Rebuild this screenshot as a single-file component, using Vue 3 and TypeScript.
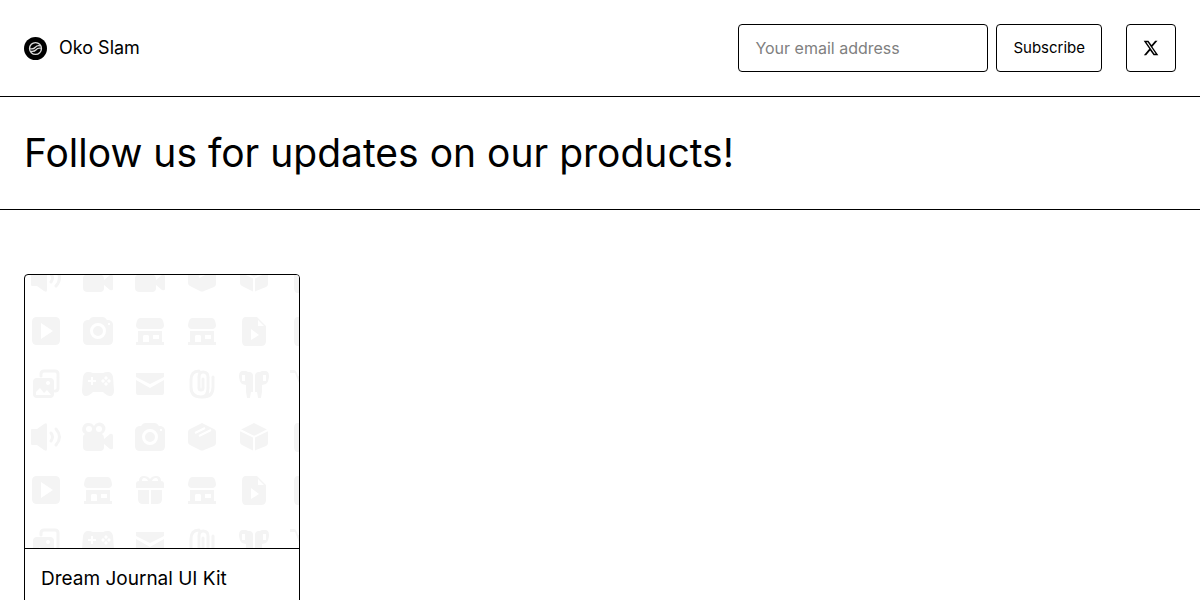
<script setup lang="ts">
import { ref } from 'vue'

interface Product {
  id: number
  title: string
}

interface Tile {
  icon: string
  x: number
  y: number
}

const email = ref('')
const products: Product[] = [{ id: 1, title: 'Dream Journal UI Kit' }]

const rows: string[][] = [
  ['speaker', 'film', 'film', 'box', 'cube', 'file'],
  ['play', 'camera', 'store', 'store', 'file', 'file'],
  ['gallery', 'gamepad', 'mail', 'clip', 'pods', 'cart'],
  ['speaker', 'film', 'camera', 'box', 'cube', 'file'],
  ['play', 'store', 'gift', 'store', 'file', 'file'],
  ['gallery', 'gamepad', 'mail', 'clip', 'pods', 'cart'],
]

const tiles: Tile[] = rows.flatMap((row, r) =>
  row.map((icon, c) => ({ icon, x: 21 + c * 52, y: 3 + r * 53 })),
)
</script>

<template>
  <div class="page">
    <header class="topbar">
      <a class="brand" href="#">
        <svg class="avatar" viewBox="0 0 24 24" aria-hidden="true">
          <circle cx="12" cy="12" r="12" />
          <circle cx="12" cy="12" r="6.200" class="ring" />
          <path class="wave" d="M6.500 12.200c3.500 1 4.500-.5 5.500-1.700s2.500-2 5-1.300M7 14.800c3 .7 4.500-.3 5.600-1.500 1.200-1.400 2-2 4.900-1.500" />
        </svg>
        <span>Oko Slam</span>
      </a>
      <div class="actions">
        <form class="subscribe" @submit.prevent>
          <input v-model="email" class="field" type="email" placeholder="Your email address" aria-label="Your email address" />
          <button class="button" type="submit">Subscribe</button>
        </form>
        <a class="button social" href="#" aria-label="X">
          <svg viewBox="0 0 24 24" aria-hidden="true">
            <path fill-rule="evenodd" d="M18.244 1.250h3.508l-7.727 8.830L23 22.750h-7.066l-5.214-6.817-5.966 6.817H1.244l8.130-9.450L1 1.250h7.080l4.713 6.231Zm-1.161 19.420h1.833L7.084 3.226H5.117Z" />
          </svg>
        </a>
      </div>
    </header>

    <section class="intro">
      <h1>Follow us for updates on our products!</h1>
    </section>

    <main class="products">
      <article v-for="product in products" :key="product.id" class="card">
        <svg class="cover" viewBox="0 0 274 273" preserveAspectRatio="xMidYMid slice" aria-hidden="true">
          <defs>
            <g id="i-speaker">
              <path d="M-14-8h5l7-5q3-2 3 1v24q0 3-3 1l-7-5h-5q-1 0-1-1V-7q0-1 1-1Z" />
              <path class="line" d="M5-4q3 4 0 8M10-8q7 8 0 16" />
            </g>
            <g id="i-film">
              <path fill-rule="evenodd" d="M-9-14a6 6 0 0 1 5 3 6 6 0 1 1 8 8q2 1 2 4v1l6-5q3-1 3 2V11q0 2-3 1L6 7v3q0 4-4 4h-12q-5 0-5-4V0q0-2 2-3a6 6 0 0 1 4-11Zm0 3a3 3 0 1 0 0 6 3 3 0 0 0 0-6Zm10 0a3 3 0 1 0 0 6 3 3 0 0 0 0-6Z" />
            </g>
            <g id="i-box">
              <path d="M0-14 12-8q2 1 2 3V6q0 2-2 3L2 13q-2 1-4 0l-10-5q-2-1-2-3V-5q0-2 2-3Z" />
              <path class="cut" d="m-7-4 10-5M-3-1 9-7" />
            </g>
            <g id="i-cube">
              <path d="M0-14 12-8q2 1 2 3V6q0 2-2 3L2 13q-2 1-4 0l-10-5q-2-1-2-3V-5q0-2 2-3Z" />
              <path class="cut" d="m-14-7 14 7 14-7M0 0v15" />
            </g>
            <g id="i-play">
              <path fill-rule="evenodd" d="M-9-14H9q5 0 5 5V9q0 5-5 5H-9q-5 0-5-5V-9q0-5 5-5Zm4 6V8L7 0Z" />
            </g>
            <g id="i-camera">
              <path fill-rule="evenodd" d="M-5-14H5q2 0 4 3h2q4 1 4 5V9q0 5-5 5h-20q-5 0-5-5V-6q0-4 4-5h2q2-3 4-3Zm5 6a8 8 0 1 0 0 16A8 8 0 0 0 0-8Zm0 3a5 5 0 1 1 0 10A5 5 0 0 1 0-5Zm10-3v2h2v-2Z" />
            </g>
            <g id="i-store">
              <path fill-rule="evenodd" d="M-10-13h20q3 0 4 7 0 4-4 4h-20q-4 0-4-4 1-7 4-7Zm-2 13h24v11h2v3h-28v-3h2Zm6 4q-1 0-1 2v5h6V6q0-2-1-2Zm9 0v4h6V4Z" />
            </g>
            <g id="i-file">
              <path fill-rule="evenodd" d="M-8-14H3l9 9V10q0 5-5 5H-8q-4 0-4-5V-9q0-5 4-5Zm12 3v6h6ZM-3-2V9l8-5Z" />
            </g>
            <g id="i-gallery">
              <path class="line" d="M-5-8v-2q0-3 3-3H9q3 0 3 3V4q0 3-3 3" />
              <path fill-rule="evenodd" d="M-9-6H4q4 0 4 4v12q0 4-4 4H-9q-4 0-4-4V-2q0-4 4-4ZM2-3a2 2 0 1 0 0 4 2 2 0 0 0 0-4ZM-10 11H5L1 6l-3 3-4-5-4 4Z" />
            </g>
            <g id="i-gamepad">
              <path fill-rule="evenodd" d="M-10-12q3 0 5 1H5q2-1 5-1 4 0 5 5l1 13q0 6-4 6-3 0-7-4H-5q-4 4-7 4-4 0-4-6l1-13q1-5 5-5Zm3 5v3h-3v2h3v3h2v-3h3v-2h-3v-3Zm12 2-2 2 2 2 2-2Zm6 0-2 2 2 2 2-2ZM8-8 6-6l2 2 2-2Zm0 6L6 0l2 2 2-2Z" />
            </g>
            <g id="i-mail">
              <path d="M-14-11h28v4L0 0l-14-7Zm0 7L0 4l14-8V9q0 2-2 2h-24q-2 0-2-2Z" />
            </g>
            <g id="i-clip">
              <path class="line" d="M1-5V4q0 2-2 2t-2-2V-7q0-5 4-5 5 0 5 5V4q0 9-7 9-10 0-10-10V-4q0-9 8-9M11-7V3q0 10-10 10" />
            </g>
            <g id="i-pods">
              <path fill-rule="evenodd" d="M-11-13h3l2 1h1q4 0 4 4V8h-2l-1 6h-3L-8 8V1l-4-1q-3-3-3-8 0-5 4-5Zm-1 4v6h3v-6ZM11-13H8l-2 1H5q-4 0-4 4V8h2l1 6h3L8 8V1l4-1q3-3 3-8 0-5-4-5ZM9-9v6h3v-6Z" />
            </g>
            <g id="i-cart">
              <path d="M-16-14h4q2 0 3 3l1 3H12L8 4H-5L-11-11h-5Z" />
              <circle cx="-4" cy="10" r="3" />
              <circle cx="7" cy="10" r="3" />
            </g>
            <g id="i-gift">
              <path fill-rule="evenodd" d="M-6-14q4 0 6 3 2-3 6-3 5 0 5 5 3 0 3 3v4H-14v-4q0-3 3-3 0-5 5-5Zm-2 5h6q-1-3-4-3-2 0-2 3Zm10 0h6q0-3-2-3-3 0-4 3ZM-12 0h11v14h-6q-5 0-5-5ZM1 0h11v9q0 5-5 5H1Z" />
            </g>
          </defs>
          <use v-for="(tile, i) in tiles" :key="i" :href="`#i-${tile.icon}`" :x="tile.x" :y="tile.y" />
        </svg>
        <h2><a href="#">{{ product.title }}</a></h2>
      </article>
    </main>
  </div>
</template>

<style>
body {
  background: #fff;
}
</style>

<style scoped>
.page {
  color: #000;
  font-family: Inter, "Liberation Sans", sans-serif;
  font-size: 16px;
  line-height: 24px;
}

a {
  color: inherit;
  text-decoration: none;
}

.topbar {
  display: flex;
  align-items: center;
  justify-content: space-between;
  gap: 24px;
  padding: 24px;
  border-bottom: 1px solid #000;
}

.brand {
  display: flex;
  align-items: center;
  gap: 12px;
  font-size: 18px;
}

.avatar {
  width: 23px;
  height: 23px;
}

.ring {
  fill: none;
  stroke: #ddd;
  stroke-width: 1.4;
}

.wave {
  fill: none;
  stroke: #ddd;
  stroke-width: 1.4;
}

.actions {
  display: flex;
  gap: 24px;
}

.subscribe {
  display: flex;
  gap: 8px;
}

.field,
.button {
  box-sizing: border-box;
  height: 48px;
  padding: 0 16px;
  border: 1px solid #000;
  border-radius: 4px;
  background: #fff;
  color: #000;
  font-family: inherit;
  font-size: 15px;
  line-height: 24px;
}

.field {
  width: 250px;
  font-size: 16px;
}

.field::placeholder {
  color: #808080;
  opacity: 1;
}

.button {
  display: flex;
  align-items: center;
  justify-content: center;
  cursor: pointer;
}

.social svg {
  width: 16px;
  height: 16px;
}

.intro {
  padding: 32px 24px;
  border-bottom: 1px solid #000;
}

.intro h1 {
  margin: 0;
  font-size: 39px;
  font-weight: 400;
  line-height: 48px;
}

.products {
  display: grid;
  grid-template-columns: repeat(auto-fill, minmax(264px, 1fr));
  gap: 16px;
  padding: 64px 24px;
}

.card {
  overflow: hidden;
  border: 1px solid #000;
  border-radius: 4px;
}

.cover {
  display: block;
  width: 100%;
  border-bottom: 1px solid #000;
  fill: #f4f4f4;
}

.line {
  fill: none;
  stroke: #f4f4f4;
  stroke-width: 3;
  stroke-linecap: round;
}

.cut {
  fill: none;
  stroke: #fff;
  stroke-width: 2;
}

.card h2 {
  margin: 0;
  padding: 16px 16px 48px;
  font-size: 19px;
  font-weight: 400;
  line-height: 28px;
}
</style>
